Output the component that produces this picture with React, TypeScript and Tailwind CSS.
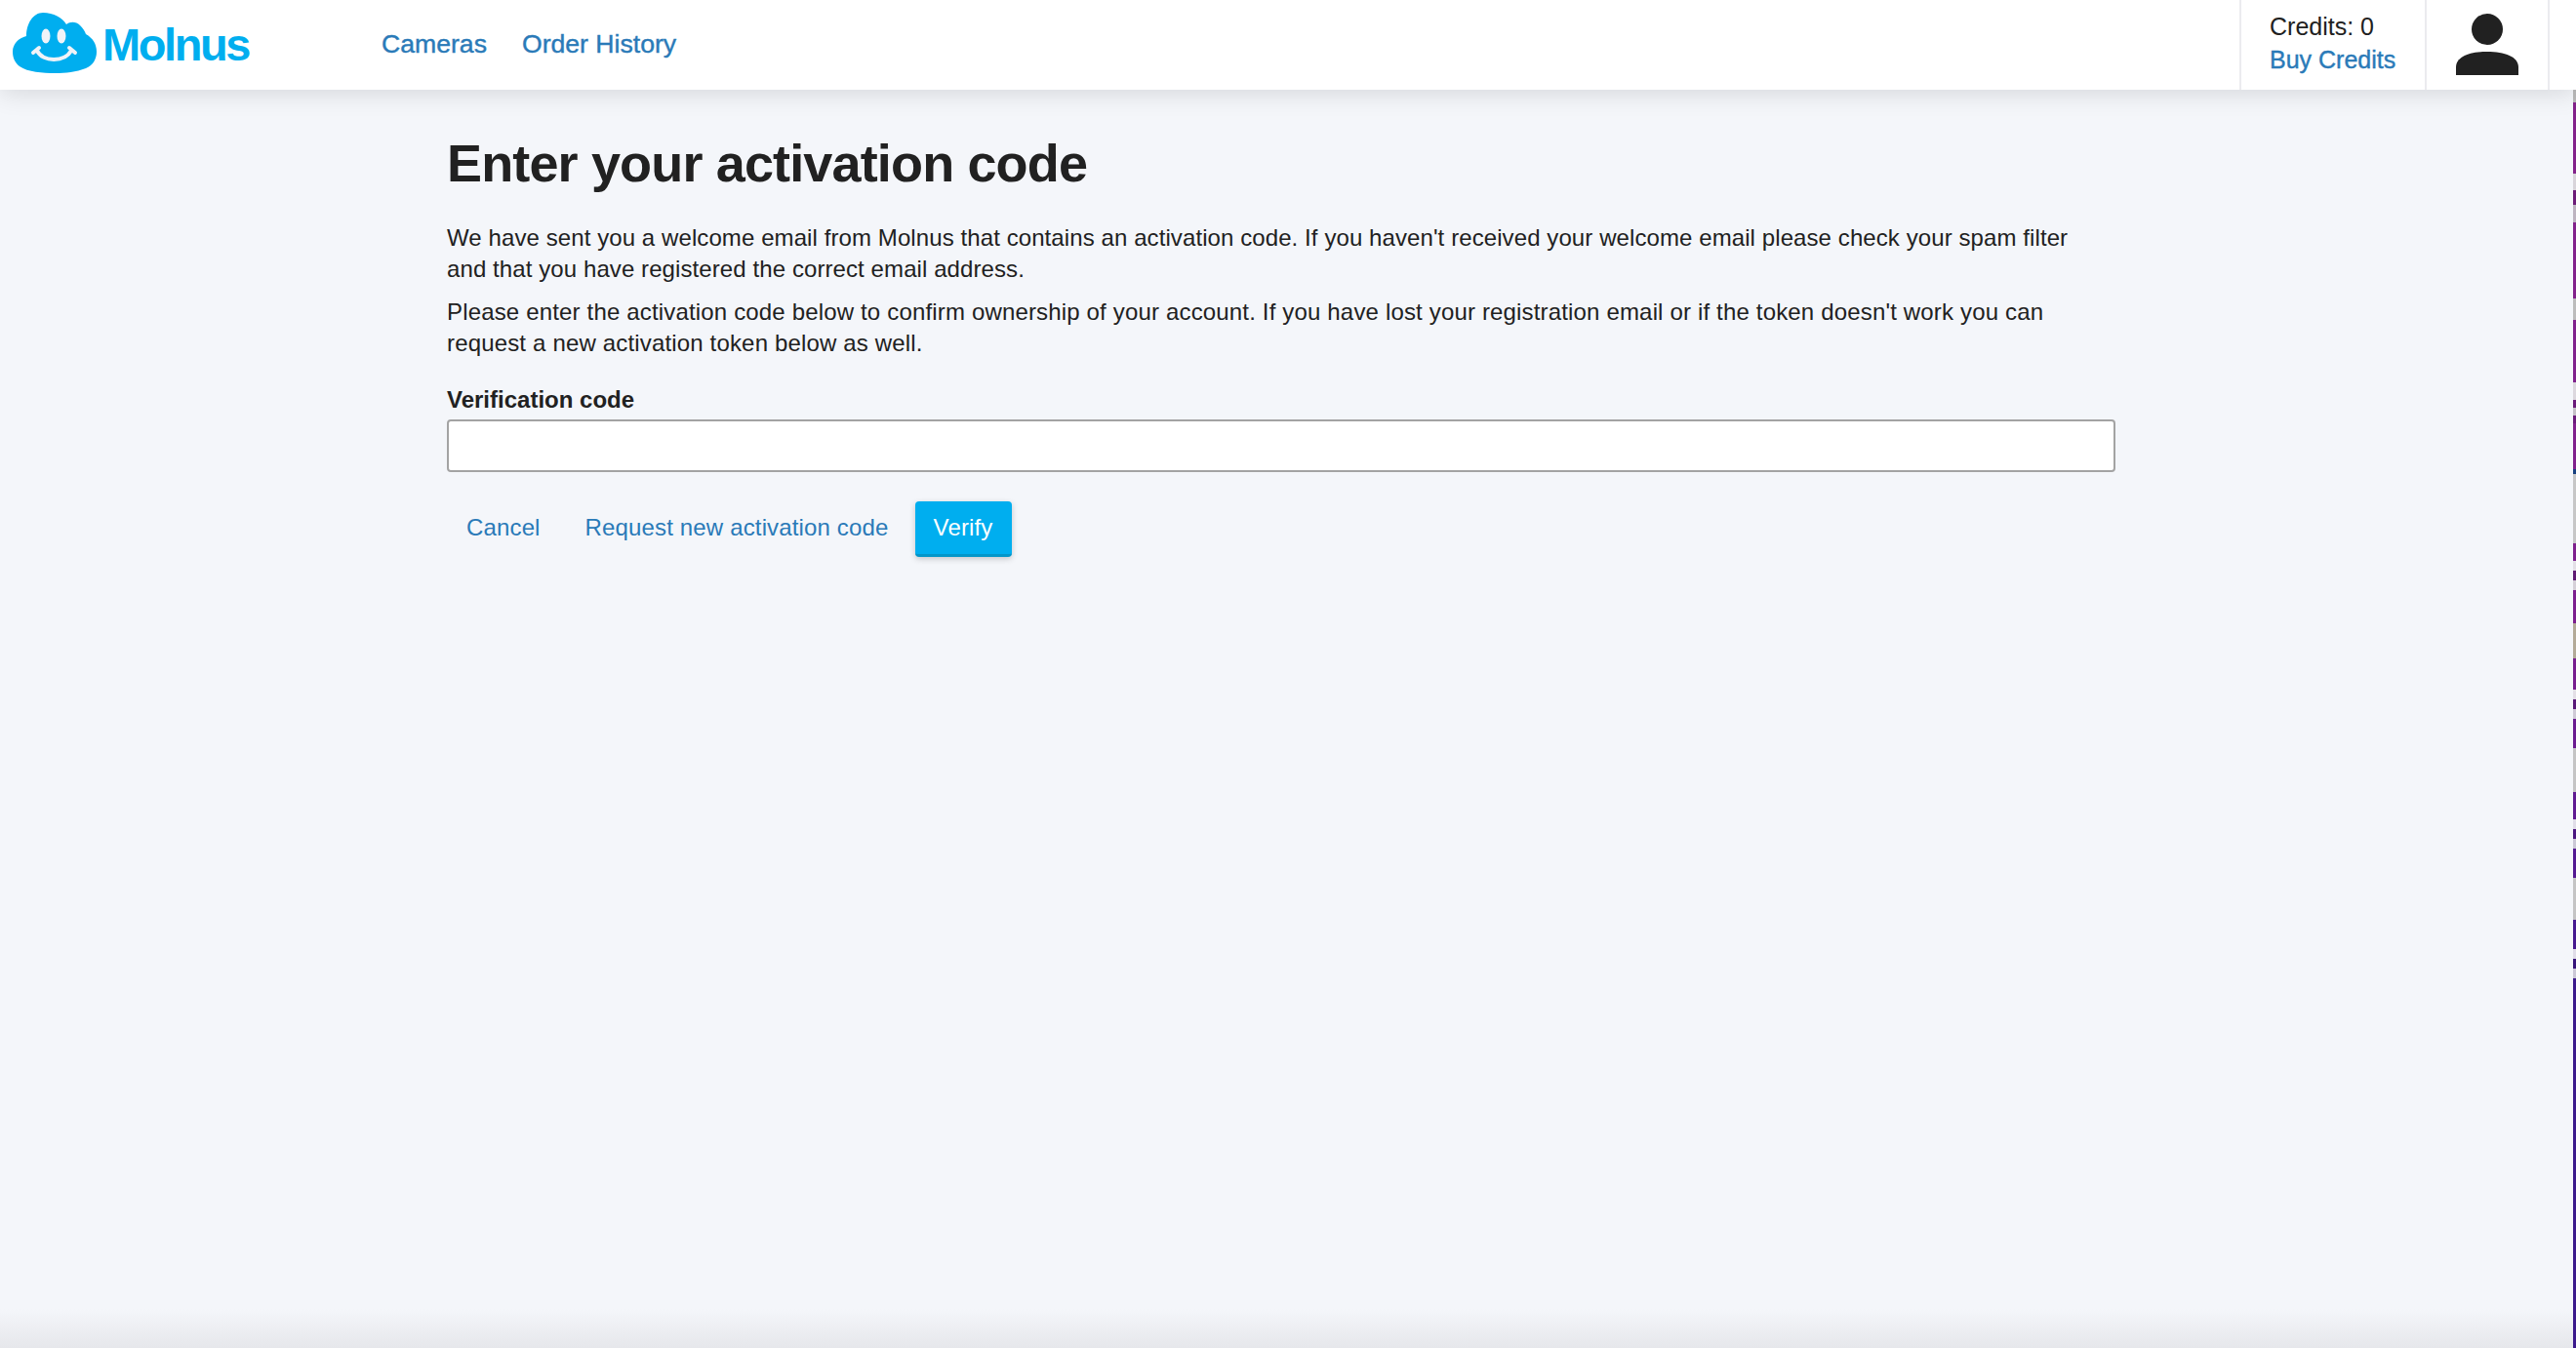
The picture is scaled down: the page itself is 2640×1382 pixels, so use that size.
const stripSegments = [
  { h: 82, c: "#85248a" },
  { h: 23, c: "#b9b9b9" },
  { h: 73, c: "#83228a" },
  { h: 17, c: "#d8d4da" },
  { h: 15, c: "#6c1c78" },
  { h: 18, c: "#bdb4c0" },
  { h: 78, c: "#82228b" },
  { h: 22, c: "#bcbcbc" },
  { h: 64, c: "#80228c" },
  { h: 18, c: "#dcd8de" },
  { h: 8, c: "#6a1b7a" },
  { h: 8, c: "#c4c0c6" },
  { h: 8, c: "#6a1b7a" },
  { h: 47, c: "#80218c" },
  { h: 5, c: "#17407f" },
  { h: 71, c: "#c6c6c6" },
  { h: 18, c: "#7e208d" },
  { h: 10, c: "#e3dfe6" },
  { h: 10, c: "#5f1a72" },
  { h: 10, c: "#d5d0d8" },
  { h: 34, c: "#7c1f8e" },
  { h: 36, c: "#b3aa98" },
  { h: 32, c: "#781e8f" },
  { h: 10, c: "#e3dfe6" },
  { h: 10, c: "#591a78" },
  { h: 10, c: "#cfcad6" },
  { h: 30, c: "#6b1c90" },
  { h: 45, c: "#c4c4c4" },
  { h: 28, c: "#601b92" },
  { h: 10, c: "#e0dde8" },
  { h: 10, c: "#4c1880" },
  { h: 10, c: "#cbc8d6" },
  { h: 30, c: "#541a92" },
  { h: 43, c: "#c4c4c4" },
  { h: 30, c: "#471a90" },
  { h: 10, c: "#e0dde8" },
  { h: 10, c: "#38157a" },
  { h: 10, c: "#cbc8d6" },
  { h: 379, c: "#3c1a8c" },
];

function Logo() {
  return (
    <div className="flex items-center">
      <svg width="88" height="64" viewBox="0 0 88 64" className="mb-[4px] ml-[12px]">
        <path
          d="M8 56C3 52 1 47 1 41C1 33 7 27 15 25C15 12 22 1 32 1C43 1 52 6 56 13C60 10 66 10 70 14C73 17 75 20 76 23C83 27 87 33 87 41C87 49 83 55 76 58C66 62 55 63 45 63C31 63 17 62 8 56Z"
          fill="#00aeef"
        />
        <ellipse cx="35" cy="25" rx="4.5" ry="7.5" fill="#f0f3f8" />
        <ellipse cx="51" cy="25" rx="4.5" ry="7.5" fill="#f0f3f8" />
        <path d="M26 40C32 52 54 52 61 40" fill="none" stroke="#f0f3f8" strokeWidth="4" strokeLinecap="round" />
        <path d="M22 42L28 37M65 42L59 37" fill="none" stroke="#f0f3f8" strokeWidth="4" strokeLinecap="round" />
      </svg>
      <span className="mb-[2px] ml-[5px] text-[47px] leading-none font-bold tracking-[-2.4px] text-[#00aeef]">Molnus</span>
    </div>
  );
}

function ScrollStrip() {
  return (
    <div className="absolute top-0 right-0 flex h-full w-[3px] flex-col">
      {stripSegments.map((segment, index) => (
        <div key={index} style={{ height: segment.h, backgroundColor: segment.c }} />
      ))}
    </div>
  );
}

export default function App() {
  return (
    <div className="relative flex h-[1382px] flex-col overflow-hidden bg-[#f4f6fa] font-['Liberation_Sans',Arial,sans-serif] text-[#212121]">
      <header className="relative z-10 flex h-[92px] items-stretch bg-white shadow-[0_4px_24px_rgba(0,0,0,0.12)]">
        <Logo />
        <nav className="ml-[136px] flex items-center gap-[36px] text-[26.6px] text-[#2a7ab8] [-webkit-text-stroke:0.4px_#2a7ab8]">
          <a>Cameras</a>
          <a>Order History</a>
        </nav>
        <div className="ml-auto flex items-stretch pr-[27px]">
          <div className="flex w-[192px] flex-col justify-center border-x-2 border-[#ebebef] pb-[5px] pl-[29px] text-[25px] leading-[34px]">
            <span>Credits: 0</span>
            <a className="text-[#2a7ab8] [-webkit-text-stroke:0.4px_#2a7ab8]">Buy Credits</a>
          </div>
          <div className="flex w-[126px] items-center justify-center border-r-2 border-[#ebebef]">
            <svg width="64" height="64" viewBox="0 0 64 64">
              <circle cx="32" cy="16" r="16" fill="#212121" />
              <path d="M0 63V55C0 44 14 39 32 39C50 39 64 44 64 55V63Z" fill="#212121" />
            </svg>
          </div>
        </div>
      </header>

      <main className="ml-[458px] w-[1710px]">
        <h1 className="mt-[41px] text-[54px] leading-[68px] font-bold tracking-[-0.85px]">Enter your activation code</h1>
        <div className="w-[1695px] text-[24px] leading-[32px]">
          <p className="mt-[27px] tracking-[0.09px]">
            We have sent you a welcome email from Molnus that contains an activation code. If you haven't received your welcome email please check your spam filter and that you have registered the correct email address.
          </p>
          <p className="mt-[12px] tracking-[0.165px]">
            Please enter the activation code below to confirm ownership of your account. If you have lost your registration email or if the token doesn't work you can request a new activation token below as well.
          </p>
        </div>
        <label className="mt-[26px] block text-[24px] leading-[32px] font-bold">Verification code</label>
        <input
          type="text"
          className="mt-[4px] block h-[54px] w-full rounded-[4px] border-2 border-[#a3a3a3] bg-white outline-none"
        />
        <div className="mt-[30px] flex items-center text-[24px] tracking-[0.15px]">
          <a className="ml-[20px] pb-[3px] text-[#2a7ab8]">Cancel</a>
          <a className="ml-[46px] pb-[3px] text-[#2a7ab8]">Request new activation code</a>
          <button
            type="button"
            className="ml-[27px] h-[57px] w-[99px] rounded-[4px] border-b-[3px] border-[#0396c9] bg-[#00aeef] text-white shadow-[0_2px_6px_rgba(0,0,0,0.2)]"
          >
            Verify
          </button>
        </div>
      </main>

      <div className="absolute right-0 bottom-0 left-0 h-[40px] bg-gradient-to-b from-transparent to-[#e6e7eb]" />
      <ScrollStrip />
    </div>
  );
}
